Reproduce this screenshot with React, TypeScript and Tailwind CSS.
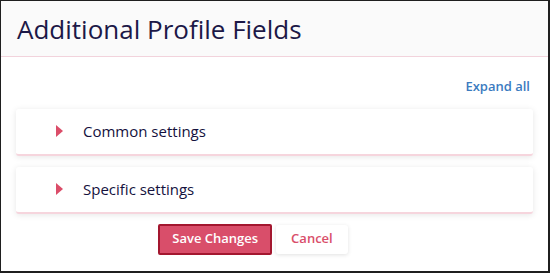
export default function App() {
  return (
    <div className="h-[273px] w-[550px] overflow-hidden border-t border-l border-r-2 border-b-2 border-[#1f1f1f] bg-white font-['Open_Sans',sans-serif]">
      <header className="flex h-[56px] items-center border-b border-[#f2d3dc] bg-[#fafafa] px-4">
        <h1 className="text-[26px] leading-none text-[#1c1847]">Additional Profile Fields</h1>
      </header>
      <div className="flex flex-col px-[15px] pt-[20px]">
        <div className="flex justify-end pr-[3px]">
          <button className="text-[13px] font-semibold text-[#3b7bbf]">Expand all</button>
        </div>
        <div className="mt-[12px] flex flex-col gap-[11px]">
          {['Common settings', 'Specific settings'].map((label) => (
            <div
              key={label}
              className="flex h-[47px] items-center rounded-[3px] border-b-2 border-[#f6d5dd] bg-white pl-[40px] shadow-[0_1px_6px_rgba(0,0,0,0.10)]"
            >
              <svg width="8" height="12" viewBox="0 0 8 12" className="text-[#db4d69]">
                <path d="M0 0 L7 6 L0 12 Z" fill="currentColor" />
              </svg>
              <span className="ml-[19px] text-[15px] font-medium text-[#14113d]">{label}</span>
            </div>
          ))}
        </div>
        <div className="mt-[10px] flex justify-center gap-[4px] pr-[43px]">
          <button className="h-[31px] rounded-[2px] border-2 border-[#a3172f] bg-[#d94e6a] px-[12px] text-[13px] font-semibold text-white">
            Save Changes
          </button>
          <button className="mt-[1px] h-[29px] rounded-[3px] bg-white px-[15px] text-[13px] font-semibold text-[#d94e6a] shadow-[0_1px_4px_rgba(0,0,0,0.12)]">
            Cancel
          </button>
        </div>
      </div>
    </div>
  );
}
